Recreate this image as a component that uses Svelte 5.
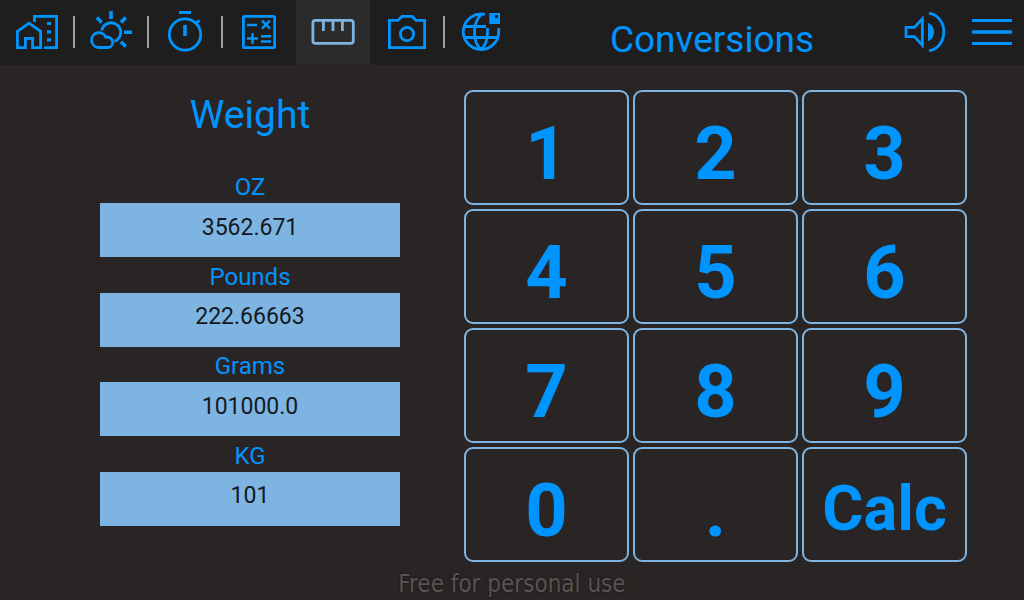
<script>
  const fields = $state([
    { id: 'oz', label: 'OZ', value: '3562.671' },
    { id: 'pounds', label: 'Pounds', value: '222.66663' },
    { id: 'grams', label: 'Grams', value: '101000.0' },
    { id: 'kg', label: 'KG', value: '101' }
  ]);
  const keys = ['1', '2', '3', '4', '5', '6', '7', '8', '9', '0', '.', 'Calc'];
</script>

<div class="screen">
  <header>
    <nav>
      <button class="tab divided" aria-label="Home">
        <svg viewBox="0 0 74 65">
          <path d="M17.4 31.3 29 23.2l11.6 8.1v16.3h-8v-9.2h-7.2v9.2h-8Z" />
          <path d="M34.4 22v-5.6h22.2v31.2H44" />
          <path class="solid" d="M47 22h4v3h-4zM47 30.3h4v3.2h-4zM47 38.3h4v3.2h-4z" />
        </svg>
      </button>
      <button class="tab divided" aria-label="Weather">
        <svg viewBox="74 0 74 65">
          <path d="M101.7 30.5a9.6 9.6 0 1 1 12.8 10.9" />
          <path d="M99 47.5a7.4 7.4 0 1 1 6.8-10.3 5.3 5.3 0 1 1 3 10.3Z" />
          <path class="ray" d="M111 11v8M96.8 17.6l4.8 4.8M125.8 17.6 121 22.4M124 32.3h8M121 41.8l4.8 4.8" />
        </svg>
      </button>
      <button class="tab divided" aria-label="Timer">
        <svg viewBox="148 0 74 65">
          <circle cx="185" cy="34.5" r="15.7" />
          <path d="M179 12.5h12M195.8 24l3.6-3.8" />
          <path class="ray" d="M185 25v11" />
        </svg>
      </button>
      <button class="tab" aria-label="Calculator">
        <svg viewBox="222 0 74 65">
          <rect x="243.4" y="16.4" width="31.2" height="31.2" rx="1.2" />
          <path class="thin" d="M247 25h10M262 20.6l8 8M270 20.6l-8 8M247 38.5h11M252.5 33v11M261 36.3h10M261 41.5h10" />
        </svg>
      </button>
      <button class="tab active" aria-label="Conversions" aria-current="page">
        <svg viewBox="296 0 74 65">
          <rect x="312.9" y="20.4" width="40.4" height="23" rx="2.6" />
          <path d="M323.4 21v10M333 21v10M342.4 21v10" />
        </svg>
      </button>
      <button class="tab divided" aria-label="Camera">
        <svg viewBox="370 0 74 65">
          <path d="M389.4 20.4h8.4l4.2-4h10l4.2 4h8.4v27.2h-35.2Z" />
          <circle cx="407" cy="34" r="6.6" />
        </svg>
      </button>
      <button class="tab" aria-label="Internet">
        <svg viewBox="444 0 74 65">
          <path d="M485 14.5a17.7 17.7 0 1 0 13.7 17.5v-4" />
          <path d="M464 26.5h22M464 37.5h34M481.5 14.5c-4 3.5-7 8-7 17.5s3 14.5 6.500 17.500c3.500-3 6.500-8 6.500-17.500v-4" />
          <path class="solid" fill-rule="evenodd" d="M489.300 13H500v11h-10.700zM495 15v3h3v-3z" />
        </svg>
      </button>
    </nav>
    <h1>Conversions</h1>
    <div class="actions">
      <button class="action" aria-label="Sound">
        <svg viewBox="902 0 46 65">
          <path d="M906 27.400h8.300l8-8.600v26.400l-8-8.600H906Z" />
          <path class="solid" d="M928 22.700c3.800 1.800 6 5.200 6 9.300s-2.200 7.500-6 9.300Z" />
          <path d="M929 13.400c8 .6 14.800 8.600 14.800 18.600s-6.800 18-14.800 18.600" />
        </svg>
      </button>
      <button class="action" aria-label="Menu">
        <svg viewBox="969 0 46 65">
          <path d="M972 20.500h40M972 43.500h40" />
          <path class="ray" d="M972 32h40" />
        </svg>
      </button>
    </div>
  </header>

  <main>
    <section class="converter">
      <h2>Weight</h2>
      <div class="fields">
        {#each fields as field (field.id)}
          <div class="field">
            <label for={field.id}>{field.label}</label>
            <input id={field.id} type="text" inputmode="decimal" bind:value={field.value} />
          </div>
        {/each}
      </div>
    </section>
    <section class="keypad">
      {#each keys as key (key)}
        <button class="key" class:word={key.length > 1}>{key}</button>
      {/each}
    </section>
  </main>

  <footer>Free for personal use</footer>
</div>

<style>
  :global(body) {
    margin: 0;
    background: #2a2525;
  }

  .screen {
    display: flex;
    flex-direction: column;
    min-height: 100vh;
    font-family: Roboto, sans-serif;
    color: #0094ff;
    background: #2a2525;
  }

  button {
    margin: 0;
    padding: 0;
    border: 0;
    background: none;
    color: inherit;
    font: inherit;
    cursor: pointer;
  }

  header {
    display: flex;
    align-items: stretch;
    height: 65px;
    background: #1e1e1e;
  }

  nav,
  .actions {
    display: flex;
  }

  .tab {
    position: relative;
    width: 74px;
  }

  .tab.active {
    color: #7eb4e2;
    background: #2b2b2b;
  }

  .divided::after {
    content: '';
    position: absolute;
    top: 16px;
    right: -1px;
    width: 2px;
    height: 32px;
    background: #a0a0a0;
  }

  svg {
    display: block;
    width: 100%;
    height: 65px;
    fill: none;
    stroke: currentColor;
    stroke-width: 2.8;
  }

  .solid {
    fill: currentColor;
    stroke: none;
  }

  .thin {
    stroke-width: 2.4;
  }

  .ray {
    stroke-width: 3.6;
  }

  h1,
  h2 {
    margin: 0;
    font-weight: 400;
    text-align: center;
  }

  h1 {
    flex: 1;
    padding: 14px 0 0 4px;
    font-size: 37px;
    line-height: 51px;
  }

  .actions {
    gap: 21px;
    padding-right: 9px;
  }

  .action {
    width: 46px;
  }

  main {
    display: grid;
    grid-template-columns: 300fr 503fr;
    gap: 64px;
    padding: 25px 57px 0 100px;
  }

  .converter {
    display: flex;
    flex-direction: column;
    padding-bottom: 36px;
  }

  h2 {
    height: 78px;
    font-size: 39px;
    line-height: 50px;
  }

  .fields {
    display: flex;
    flex: 1;
    flex-direction: column;
    justify-content: space-between;
  }

  .field {
    display: flex;
    flex-direction: column;
  }

  label {
    height: 33px;
    padding-top: 2px;
    font-size: 24px;
    line-height: 35px;
    text-align: center;
  }

  input {
    box-sizing: border-box;
    width: 100%;
    height: 54px;
    margin: 0;
    padding: 0 0 6px;
    border: 0;
    border-radius: 0;
    background: #7eb4e2;
    color: #15191d;
    font: 23px Roboto, sans-serif;
    text-align: center;
  }

  .keypad {
    display: grid;
    grid-template-columns: repeat(3, 1fr);
    grid-auto-rows: 115px;
    gap: 4px;
  }

  .key {
    padding-top: 12px;
    border: 2px solid #7eb4e2;
    border-radius: 9px;
    font-size: 74px;
    font-weight: 700;
    line-height: 88px;
  }

  .key.word {
    padding-top: 8px;
    font-size: 63px;
  }

  footer {
    flex: 1;
    padding-top: 7px;
    font-family: 'DejaVu Sans Condensed', 'DejaVu Sans', sans-serif;
    font-size: 24px;
    line-height: 30px;
    text-align: center;
    color: #565452;
    text-shadow: 0 0 2px #151212;
  }
</style>
